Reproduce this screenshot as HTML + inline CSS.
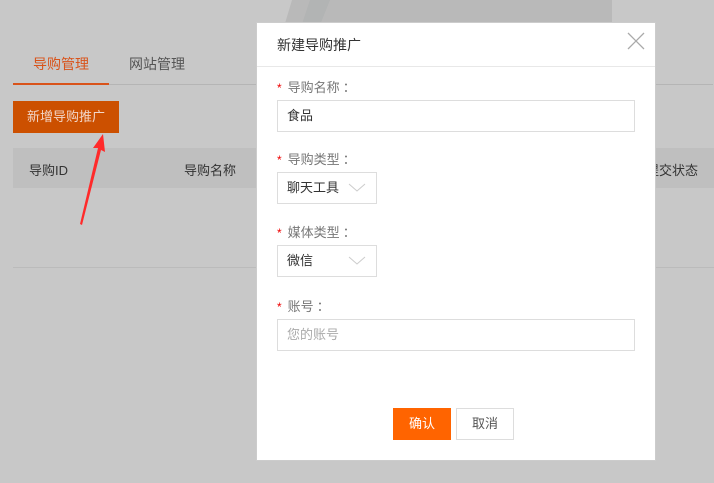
<!DOCTYPE html>
<html><head><meta charset="utf-8"><style>
*{margin:0;padding:0;box-sizing:border-box}
body{width:714px;height:483px;background:#c8c8c8;position:relative;overflow:hidden;font-family:"Liberation Sans","Noto Sans CJK SC",sans-serif;font-size:13px;color:#333}
.a{position:absolute}
.lbl{position:absolute;left:20px;font-size:13px;color:#777}
.lbl b{color:#e00;font-weight:normal;margin-right:6px;font-size:12px}
.lbl i{font-style:normal;margin-left:3px}
.inp{position:absolute;left:20px;height:32px;border:1px solid #ddd;background:#fff;padding-left:9px;line-height:30px;font-size:13px;color:#333}
.sel svg{position:absolute;right:10px;top:10px}
</style></head><body>
<svg class="a" style="left:0;top:0" width="714" height="40"><polygon points="292,0 612,0 612,30 283,30" fill="#b9b9b9"/><polygon points="310,0 330,0 318,30 300,30" fill="#b2b4b4"/></svg>
<div class="a" style="left:33px;top:54px;font-size:14px;color:#d9531a">导购管理</div>
<div class="a" style="left:129px;top:54px;font-size:14px;color:#555">网站管理</div>
<div class="a" style="left:13px;top:84px;width:700px;height:1px;background:#b5b5b5"></div>
<div class="a" style="left:13px;top:83px;width:96px;height:2px;background:#d9531a"></div>
<div class="a" style="left:13px;top:101px;width:106px;height:32px;background:#cc5000;color:#f2d6c8;font-size:13px;line-height:32px;text-align:center">新增导购推广</div>
<div class="a" style="left:13px;top:148px;width:701px;height:40px;background:#bfbfbf"></div>
<div class="a" style="left:29px;top:160px;color:#333">导购ID</div>
<div class="a" style="left:184px;top:160px;color:#333">导购名称</div>
<div class="a" style="left:646px;top:160px;color:#333">提交状态</div>
<div class="a" style="left:13px;top:267px;width:701px;height:1px;background:#bbb"></div>
<svg class="a" style="left:75px;top:130px" width="40" height="100"><polygon points="28,4 18,18 23,18 5,94 7,95 26,20 30,22" fill="#ff2a2a"/></svg>
<div class="a" style="left:256px;top:22px;width:400px;height:439px;background:#fff;border:1px solid #ccc">
 <div class="a" style="left:20px;top:12px;font-size:14px;color:#333">新建导购推广</div>
 <svg class="a" style="left:370px;top:9px" width="18" height="18"><path d="M1 1L17 17M17 1L1 17" stroke="#aaa" stroke-width="1.3"/></svg>
 <div class="a" style="left:0;top:43px;width:398px;height:1px;background:#e8e8e8"></div>
 <div class="lbl" style="top:54px"><b>*</b>导购名称<i>：</i></div>
 <div class="inp" style="top:77px;width:358px">食品</div>
 <div class="lbl" style="top:126px"><b>*</b>导购类型<i>：</i></div>
 <div class="inp sel" style="top:149px;width:100px">聊天工具<svg width="18" height="10"><path d="M1 1L9 8L17 1" stroke="#ccc" fill="none"/></svg></div>
 <div class="lbl" style="top:199px"><b>*</b>媒体类型<i>：</i></div>
 <div class="inp sel" style="top:222px;width:100px">微信<svg width="18" height="10"><path d="M1 1L9 8L17 1" stroke="#ccc" fill="none"/></svg></div>
 <div class="lbl" style="top:273px"><b>*</b>账号<i>：</i></div>
 <div class="inp" style="top:296px;width:358px;color:#aaa">您的账号</div>
 <div class="a" style="left:136px;top:385px;width:58px;height:32px;background:#ff6400;color:#fff;text-align:center;line-height:32px">确认</div>
 <div class="a" style="left:199px;top:385px;width:58px;height:32px;border:1px solid #ddd;color:#555;text-align:center;line-height:30px">取消</div>
</div>
</body></html>
